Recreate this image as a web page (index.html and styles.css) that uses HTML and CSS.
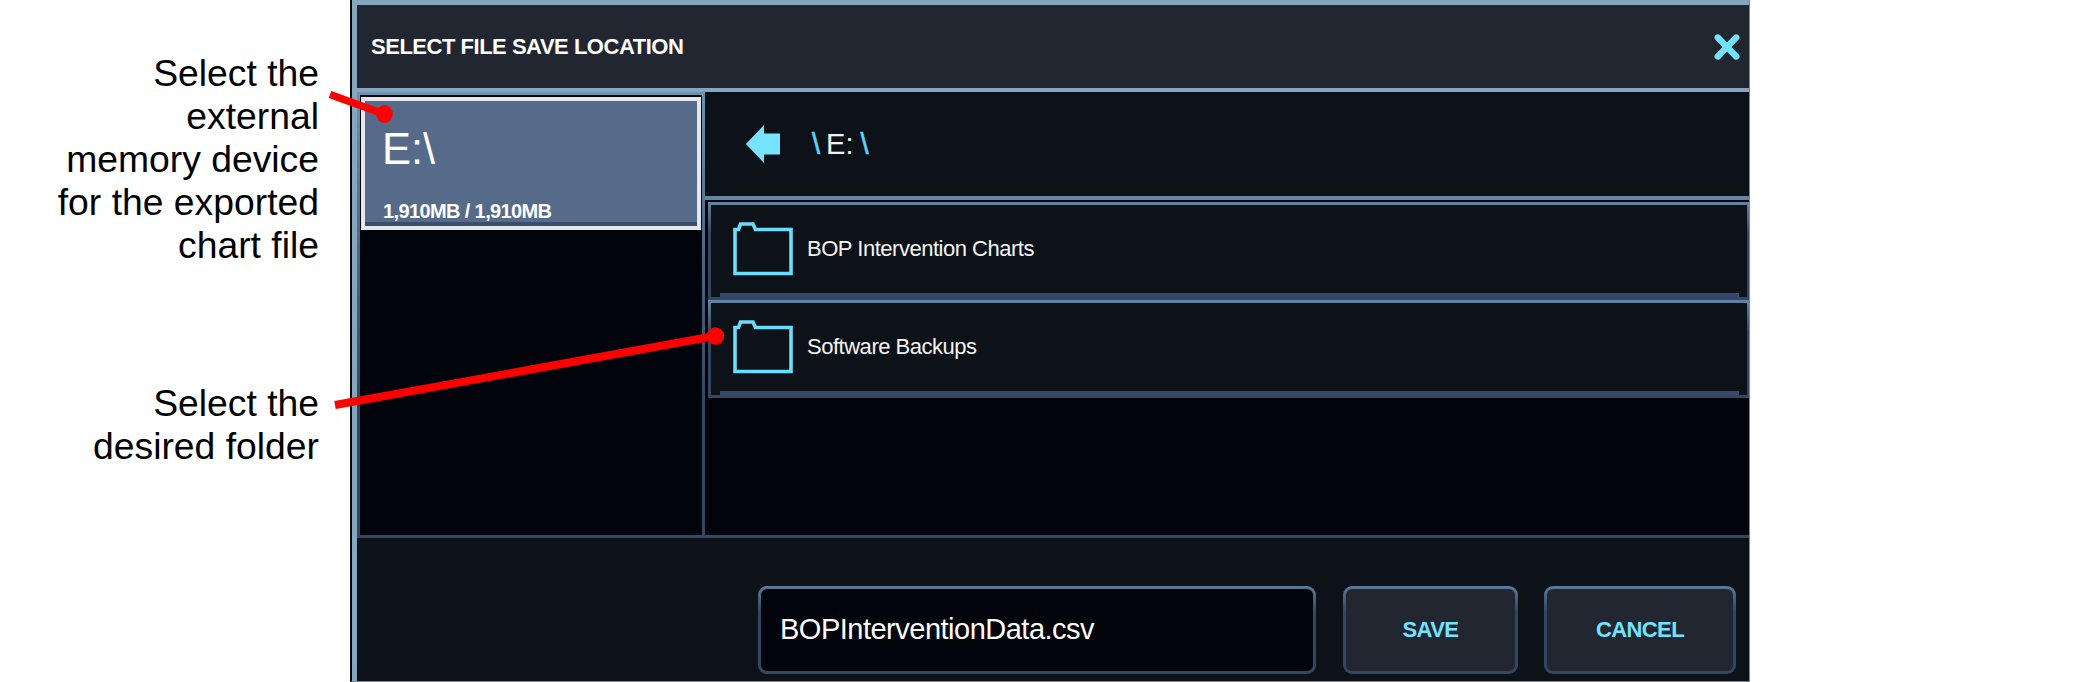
FILE: index.html
```html
<!DOCTYPE html>
<html lang="en">
<head>
<meta charset="utf-8">
<title>Select File Save Location</title>
<link rel="stylesheet" href="styles.css">
</head>
<body>
<div class="page">
  <aside class="notes">
    <p class="note note-device">Select the<br>external<br>memory device<br>for the exported<br>chart file</p>
    <p class="note note-folder">Select the<br>desired folder</p>
  </aside>

  <main class="dialog">
    <header class="header">
      <h1 class="title">SELECT FILE SAVE LOCATION</h1>
      <svg class="close" width="28" height="28" viewBox="0 0 28 28"><path d="M4.800 4.600 23.200 23.400M23.200 4.600 4.800 23.400"/></svg>
    </header>

    <div class="content">
      <section class="drives">
        <div class="drive">
          <div class="drive-name">E:\</div>
          <div class="drive-size">1,910MB / 1,910MB</div>
        </div>
      </section>
      <section class="browser">
        <nav class="path">
          <svg class="back" width="34" height="38" viewBox="0 0 34 38"><path d="M0 19 18 0V8.500H34V29.500H18V38Z"/></svg>
          <span class="slash">\</span><span class="crumb">E:</span><span class="slash">\</span>
        </nav>
        <div class="list">
          <div class="row">
            <svg class="folder" width="60" height="54" viewBox="0 0 60 54"><path d="M2 7.500H5.500L7.500 2H20L22.500 7.500H58V51.500H2Z"/></svg>
            <span class="label">BOP Intervention Charts</span>
          </div>
          <div class="row">
            <svg class="folder" width="60" height="54" viewBox="0 0 60 54"><path d="M2 7.500H5.500L7.500 2H20L22.500 7.500H58V51.500H2Z"/></svg>
            <span class="label">Software Backups</span>
          </div>
        </div>
      </section>
    </div>

    <footer class="footer">
      <div class="framed filename"><span>BOPInterventionData.csv</span></div>
      <div class="framed button save"><span>SAVE</span></div>
      <div class="framed button cancel"><span>CANCEL</span></div>
    </footer>
  </main>

  <svg class="pointers" width="2100" height="682" viewBox="0 0 2100 682">
    <path d="M330 94.500 384 114" stroke-width="7.500"/>
    <ellipse cx="384.500" cy="114" rx="8.300" ry="9"/>
    <path d="M335 405 715 336" stroke-width="8"/>
    <circle cx="715.500" cy="336" r="8.700"/>
  </svg>
</div>
</body>
</html>
```
FILE: styles.css
```css
* { box-sizing: border-box; }
body {
  margin: 0;
  background: #fff;
  font-family: "Liberation Sans", Arial, sans-serif;
}
.page {
  position: relative;
  display: flex;
  width: 2100px;
  height: 682px;
  overflow: hidden;
}
.notes {
  width: 350px;
  padding: 52px 31px 0 0;
  text-align: right;
}
.note {
  margin: 0;
  font-size: 37.3px;
  line-height: 43px;
  color: #000;
}
.note-folder { margin-top: 115px; }

.dialog {
  display: flex;
  flex-direction: column;
  width: 1400px;
  height: 682px;
  border-left: 2px solid #05080c;
  border-right: 1px solid #808488;
  border-bottom: 1px solid #808488;
  background: #0d1218;
  box-shadow: inset 5px 0 #86a6be;
  padding-left: 5px;
}
.header {
  display: flex;
  align-items: center;
  justify-content: space-between;
  height: 92px;
  border-top: 5px solid #86a6be;
  border-bottom: 4px solid #86a6be;
  background: #212631;
  padding: 0 8px 0 14px;
}
.title {
  margin: 0;
  font-size: 22px;
  line-height: 26px;
  letter-spacing: -0.48px;
  color: #fff;
}
.close { fill: none; stroke: #74e2ff; stroke-width: 6.5; stroke-linecap: round; }

.content {
  display: flex;
  height: 446px;
  border-bottom: 3px solid #344762;
}
.drives {
  width: 348px;
  border: 3px solid;
  border-bottom: 0;
  border-image: linear-gradient(#6f91b0, #4c6784 35%, #344762 70%) 3;
  background: #01040b;
  padding: 2px 1px 1px;
}
.drive {
  height: 133px;
  border: 4px solid #e6e7ea;
  background: #566b8a;
  box-shadow: inset 0 -4px #3a4d6a;
  color: #fff;
  padding: 23px 0 0 17px;
}
.drive-name { font-size: 43.5px; line-height: 50px; }
.drive-size {
  margin-top: 25px;
  padding-left: 1px;
  font-size: 20px;
  font-weight: bold;
  line-height: 24px;
  letter-spacing: -0.62px;
}
.browser {
  flex: 1;
  background: #01040b;
}
.path {
  display: flex;
  align-items: center;
  height: 108px;
  border-bottom: 4px solid #6384a2;
  background: #0d1218;
  padding: 0 0 0 41px;
  font-size: 29px;
  line-height: 34px;
}
.back { fill: #76e3ff; margin-right: 32px; }
.slash { color: #5cd5fb; -webkit-text-stroke: 0.6px #5cd5fb; }
.crumb { color: #f2f2f2; margin: 0 7px 0 6px; }
.list { padding: 2px 0 0 3px; }
.row {
  display: flex;
  align-items: center;
  height: 98px;
  border: 3px solid;
  border-right-width: 2px;
  border-image: linear-gradient(#6385a3, #344762 32%) 3;
  background: linear-gradient(#36496a, #36496a) 9px 100% / calc(100% - 17px) 4px no-repeat padding-box, #0d1218;
  padding: 0 0 4px 22px;
}
.folder { fill: none; stroke: #6bdcfb; stroke-width: 3.6; }
.label {
  margin: -1px 0 0 14px;
  font-size: 22px;
  line-height: 26px;
  letter-spacing: -0.48px;
  color: #f5f5f5;
}
.footer {
  display: flex;
  align-items: flex-start;
  padding: 48px 0 0 401px;
}
.framed {
  display: flex;
  align-items: center;
  height: 88px;
  border-radius: 9px;
  padding: 3px;
  background: linear-gradient(#5a7b9b, #344762 28%);
}
.framed span {
  display: flex;
  align-items: center;
  width: 100%;
  height: 100%;
  border-radius: 6px;
  background: #212631;
  padding-bottom: 1px;
}
.filename { width: 558px; margin-right: 27px; }
.filename span {
  background: #01040b;
  padding-left: 19px;
  padding-bottom: 2px;
  font-size: 29px;
  letter-spacing: -0.5px;
  color: #fff;
}
.button span {
  justify-content: center;
  font-size: 22px;
  font-weight: bold;
  letter-spacing: -0.6px;
  color: #74e2ff;
}
.save { width: 175px; margin-right: 26px; }
.cancel { width: 192px; }

.pointers {
  position: absolute;
  inset: 0;
  fill: #f00;
  stroke: none;
}
.pointers path { stroke: #f00; }
```
